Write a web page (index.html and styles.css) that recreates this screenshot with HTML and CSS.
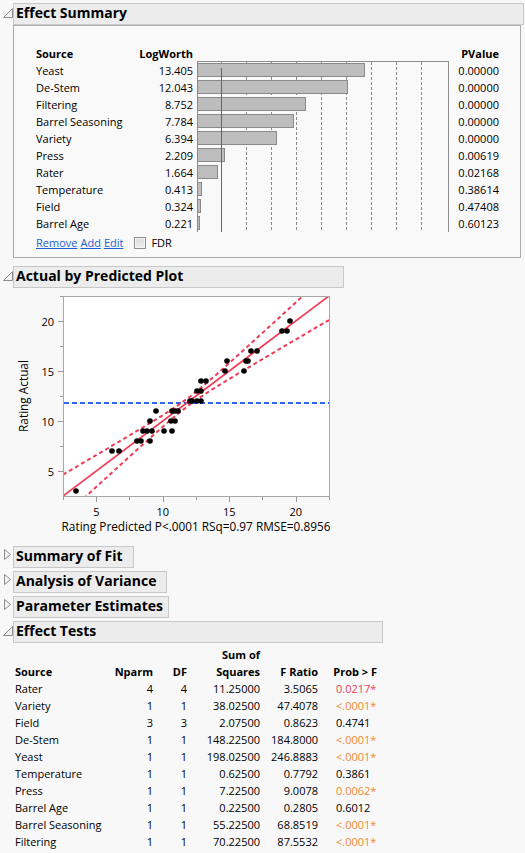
FILE: index.html
```html
<!DOCTYPE html>
<html>
<head>
<meta charset="utf-8">
<title>Fit Least Squares</title>
<link rel="stylesheet" href="styles.css">
</head>
<body>

<section class="outline">
  <div class="ohead">
    <span class="tri-box"><svg class="tri-open" width="10" height="10" viewBox="0 0 10 10"><path d="M0.5 9.5H9.5V0.5Z" fill="#f2f2f2" stroke="#8c8c8c"/></svg></span>
    <div class="otitle w-es">Effect Summary</div>
  </div>
  <div class="es-box">
    <div class="es-grid">
      <div class="col col-name">
        <div class="cell th">Source</div>
        <div class="cell">Yeast</div>
        <div class="cell">De-Stem</div>
        <div class="cell">Filtering</div>
        <div class="cell">Barrel Seasoning</div>
        <div class="cell">Variety</div>
        <div class="cell">Press</div>
        <div class="cell">Rater</div>
        <div class="cell">Temperature</div>
        <div class="cell">Field</div>
        <div class="cell">Barrel Age</div>
      </div>
      <div class="col col-lw">
        <div class="cell th">LogWorth</div>
        <div class="cell">13.405</div>
        <div class="cell">12.043</div>
        <div class="cell">8.752</div>
        <div class="cell">7.784</div>
        <div class="cell">6.394</div>
        <div class="cell">2.209</div>
        <div class="cell">1.664</div>
        <div class="cell">0.413</div>
        <div class="cell">0.324</div>
        <div class="cell">0.221</div>
      </div>
      <div class="bar-panel">
        <div class="bar-row"><div class="bar" style="width:167.6px"></div></div>
        <div class="bar-row"><div class="bar" style="width:150.5px"></div></div>
        <div class="bar-row"><div class="bar" style="width:109.4px"></div></div>
        <div class="bar-row"><div class="bar" style="width:97.3px"></div></div>
        <div class="bar-row"><div class="bar" style="width:79.9px"></div></div>
        <div class="bar-row"><div class="bar" style="width:27.6px"></div></div>
        <div class="bar-row"><div class="bar" style="width:20.8px"></div></div>
        <div class="bar-row"><div class="bar" style="width:5.2px"></div></div>
        <div class="bar-row"><div class="bar" style="width:4.1px"></div></div>
        <div class="bar-row"><div class="bar" style="width:2.8px"></div></div>
      </div>
      <div class="col col-pv">
        <div class="cell th">PValue</div>
        <div class="cell">0.00000</div>
        <div class="cell">0.00000</div>
        <div class="cell">0.00000</div>
        <div class="cell">0.00000</div>
        <div class="cell">0.00000</div>
        <div class="cell">0.00619</div>
        <div class="cell">0.02168</div>
        <div class="cell">0.38614</div>
        <div class="cell">0.47408</div>
        <div class="cell">0.60123</div>
      </div>
    </div>
    <div class="es-links">
      <a class="lnk">Remove</a>
      <a class="lnk">Add</a>
      <a class="lnk">Edit</a>
      <span class="chk"></span>
      <span class="fdr">FDR</span>
    </div>
  </div>
</section>

<section class="outline abp">
  <div class="ohead">
    <span class="tri-box"><svg class="tri-open" width="10" height="10" viewBox="0 0 10 10"><path d="M0.5 9.5H9.5V0.5Z" fill="#f2f2f2" stroke="#8c8c8c"/></svg></span>
    <div class="otitle w-abp">Actual by Predicted Plot</div>
  </div>
  <svg class="apchart" width="340" height="250" viewBox="0 0 340 250">
    <defs><clipPath id="pc"><rect x="64" y="9" width="265" height="199"/></clipPath></defs>
    <rect x="63.5" y="8.5" width="266" height="200" fill="#ffffff" stroke="#a8a8a8"/>
    <path d="M58 33.5H63M58 83.5H63M58 133.5H63M58 183.5H63" stroke="#9a9a9a"/>
    <path d="M60 8.5H63M60 58.5H63M60 108.5H63M60 158.5H63" stroke="#9a9a9a"/>
    <path d="M96.5 209V214M163.5 209V214M229.5 209V214M296.5 209V214" stroke="#9a9a9a"/>
    <path d="M63.5 209V212M129.5 209V212M196.5 209V212M262.5 209V212M329.5 209V212" stroke="#9a9a9a"/>
    <text class="tk" x="54" y="38" text-anchor="end">20</text>
    <text class="tk" x="54" y="88" text-anchor="end">15</text>
    <text class="tk" x="54" y="138" text-anchor="end">10</text>
    <text class="tk" x="54" y="188" text-anchor="end">5</text>
    <text class="tk" x="96.3" y="228" text-anchor="middle">5</text>
    <text class="tk" x="162.8" y="228" text-anchor="middle">10</text>
    <text class="tk" x="229.3" y="228" text-anchor="middle">15</text>
    <text class="tk" x="295.8" y="228" text-anchor="middle">20</text>
    <text class="tk ax-title" x="196" y="243" text-anchor="middle">Rating Predicted P&lt;.0001 RSq=0.97 RMSE=0.8956</text>
    <text class="tk ax-title" transform="translate(28,108) rotate(-90)" text-anchor="middle">Rating Actual</text>
    <g clip-path="url(#pc)">
      <line x1="64" y1="115" x2="329" y2="115" stroke="#2f66f2" stroke-width="2" stroke-dasharray="5 3"/>
      <line x1="63" y1="208" x2="329" y2="8" stroke="#ee3c55" stroke-width="1.7"/>
      <path d="M63,186.6L82.95,174.9L109.55,159.25L136.15,143.46L149.45,135.45L162.75,127.25L176.05,118.63L189.35,109.12L202.65,98.41L215.95,86.91L229.25,75.06L242.55,63.05L269.15,38.82L295.75,14.48L309.05,2.3" fill="none" stroke="#ee3c55" stroke-width="2" stroke-dasharray="4 3"/>
      <path d="M63,229.4L82.95,211.1L109.55,186.75L136.15,162.54L149.45,150.55L162.75,138.75L176.05,127.36L189.35,116.88L202.65,107.59L215.95,99.09L229.25,90.94L242.55,82.95L269.15,67.18L295.75,51.52L309.05,43.71L329,32.02" fill="none" stroke="#ee3c55" stroke-width="2" stroke-dasharray="4 3"/>
      <g fill="#000">
        <circle cx="76" cy="203" r="2.8"/>
        <circle cx="112" cy="163" r="2.8"/>
        <circle cx="119" cy="163" r="2.8"/>
        <circle cx="137" cy="153" r="2.8"/>
        <circle cx="141" cy="153" r="2.8"/>
        <circle cx="150" cy="153" r="2.8"/>
        <circle cx="143" cy="143" r="2.8"/>
        <circle cx="147" cy="143" r="2.8"/>
        <circle cx="152" cy="143" r="2.8"/>
        <circle cx="164" cy="143" r="2.8"/>
        <circle cx="172" cy="143" r="2.8"/>
        <circle cx="150" cy="133" r="2.8"/>
        <circle cx="171" cy="133" r="2.8"/>
        <circle cx="175" cy="133" r="2.8"/>
        <circle cx="156" cy="123" r="2.8"/>
        <circle cx="172" cy="123" r="2.8"/>
        <circle cx="175" cy="123" r="2.8"/>
        <circle cx="178" cy="123" r="2.8"/>
        <circle cx="190" cy="113" r="2.8"/>
        <circle cx="192" cy="113" r="2.8"/>
        <circle cx="197" cy="113" r="2.8"/>
        <circle cx="201" cy="113" r="2.8"/>
        <circle cx="197" cy="103" r="2.8"/>
        <circle cx="201" cy="103" r="2.8"/>
        <circle cx="201" cy="93" r="2.8"/>
        <circle cx="206" cy="93" r="2.8"/>
        <circle cx="225" cy="83" r="2.8"/>
        <circle cx="244" cy="83" r="2.8"/>
        <circle cx="227" cy="73" r="2.8"/>
        <circle cx="246" cy="73" r="2.8"/>
        <circle cx="248" cy="73" r="2.8"/>
        <circle cx="251" cy="63" r="2.8"/>
        <circle cx="257" cy="63" r="2.8"/>
        <circle cx="282" cy="43" r="2.8"/>
        <circle cx="287" cy="43" r="2.8"/>
        <circle cx="290" cy="33" r="2.8"/>
      </g>
    </g>
  </svg>
</section>

<section class="outline closed first-closed">
  <div class="ohead">
    <span class="tri-box"><svg class="tri-closed" width="8" height="11" viewBox="0 0 8 11"><path d="M0.5 0.5L6.5 5.5L0.5 10.5Z" fill="#f2f2f2" stroke="#8c8c8c"/></svg></span>
    <div class="otitle w-sof">Summary of Fit</div>
  </div>
</section>
<section class="outline closed">
  <div class="ohead">
    <span class="tri-box"><svg class="tri-closed" width="8" height="11" viewBox="0 0 8 11"><path d="M0.5 0.5L6.5 5.5L0.5 10.5Z" fill="#f2f2f2" stroke="#8c8c8c"/></svg></span>
    <div class="otitle w-aov">Analysis of Variance</div>
  </div>
</section>
<section class="outline closed">
  <div class="ohead">
    <span class="tri-box"><svg class="tri-closed" width="8" height="11" viewBox="0 0 8 11"><path d="M0.5 0.5L6.5 5.5L0.5 10.5Z" fill="#f2f2f2" stroke="#8c8c8c"/></svg></span>
    <div class="otitle w-pe">Parameter Estimates</div>
  </div>
</section>

<section class="outline et-section">
  <div class="ohead">
    <span class="tri-box"><svg class="tri-open" width="10" height="10" viewBox="0 0 10 10"><path d="M0.5 9.5H9.5V0.5Z" fill="#f2f2f2" stroke="#8c8c8c"/></svg></span>
    <div class="otitle w-et">Effect Tests</div>
  </div>
  <table class="et">
    <colgroup>
      <col class="c-src"><col class="c-np"><col class="c-df"><col class="c-ss"><col class="c-fr"><col class="c-p">
    </colgroup>
    <thead>
      <tr><th></th><th></th><th></th><th>Sum of</th><th></th><th></th></tr>
      <tr><th class="src">Source</th><th>Nparm</th><th>DF</th><th>Squares</th><th>F Ratio</th><th>Prob &gt; F</th></tr>
    </thead>
    <tbody>
      <tr><td class="src">Rater</td><td>4</td><td>4</td><td>11.25000</td><td>3.5065</td><td class="p sig-r">0.0217*</td></tr>
      <tr><td class="src">Variety</td><td>1</td><td>1</td><td>38.02500</td><td>47.4078</td><td class="p sig-o">&lt;.0001*</td></tr>
      <tr><td class="src">Field</td><td>3</td><td>3</td><td>2.07500</td><td>0.8623</td><td class="p">0.4741</td></tr>
      <tr><td class="src">De-Stem</td><td>1</td><td>1</td><td>148.22500</td><td>184.8000</td><td class="p sig-o">&lt;.0001*</td></tr>
      <tr><td class="src">Yeast</td><td>1</td><td>1</td><td>198.02500</td><td>246.8883</td><td class="p sig-o">&lt;.0001*</td></tr>
      <tr><td class="src">Temperature</td><td>1</td><td>1</td><td>0.62500</td><td>0.7792</td><td class="p">0.3861</td></tr>
      <tr><td class="src">Press</td><td>1</td><td>1</td><td>7.22500</td><td>9.0078</td><td class="p sig-o">0.0062*</td></tr>
      <tr><td class="src">Barrel Age</td><td>1</td><td>1</td><td>0.22500</td><td>0.2805</td><td class="p">0.6012</td></tr>
      <tr><td class="src">Barrel Seasoning</td><td>1</td><td>1</td><td>55.22500</td><td>68.8519</td><td class="p sig-o">&lt;.0001*</td></tr>
      <tr><td class="src">Filtering</td><td>1</td><td>1</td><td>70.22500</td><td>87.5532</td><td class="p sig-o">&lt;.0001*</td></tr>
    </tbody>
  </table>
</section>

</body>
</html>
```

FILE: styles.css
```css
* { box-sizing: border-box; }
html, body { margin: 0; }
body {
  background: #f8f8f8;
  font-family: "Open Sans", "Noto Sans", sans-serif;
  font-size: 11px;
  color: #000;
  padding-top: 3px;
  width: 525px;
  height: 853px;
  overflow: hidden;
}

/* outline headers */
.ohead { display: flex; height: 22px; }
.tri-box { flex: none; width: 13px; position: relative; }
.tri-open { display: block; margin: 5px 0 0 3px; }
.tri-closed { display: block; margin: 3px 0 0 4px; }
.otitle {
  height: 22px;
  border: 1px solid #c8c8c8;
  background: #ececec;
  font-weight: 700;
  font-size: 14px;
  line-height: 17px;
  padding: 0 2px;
  white-space: nowrap;
}
.w-es { width: 511px; }
.w-abp { width: 331px; }
.w-sof { width: 121px; }
.w-aov { width: 154px; }
.w-pe { width: 156px; }
.w-et { width: 370px; }

/* effect summary */
.es-box {
  margin-left: 13px;
  width: 508px;
  height: 233px;
  border: 1px solid #acacac;
  background: #f9f9f9;
  padding: 19px 0 0 22px;
  margin-bottom: 8px;
}
.es-grid { display: flex; align-items: flex-start; }
.col { flex: none; }
.cell { height: 17px; line-height: 17px; white-space: nowrap; }
.th { font-weight: 700; }
.col-name { width: 100px; }
.col-lw { width: 57px; text-align: right; }
.col-pv { width: 50px; text-align: right; }
.bar-panel {
  flex: none;
  position: relative;
  margin: 16px 0 0 4px;
  width: 252px;
  height: 171px;
  border: 1px solid #8e8e8e;
  border-bottom: none;
  background-color: #f9f9f9;
  background-image:
    repeating-linear-gradient(to bottom, transparent 0 3px, #f9f9f9 3px 5px),
    repeating-linear-gradient(to right, transparent 0 23px, #8a8a8a 23px 24px, transparent 24px 25px);
  background-size: 100% 100%, 224px 100%;
  background-repeat: no-repeat;
}
.bar-panel::after {
  content: "";
  position: absolute;
  left: 23px;
  top: 6px;
  bottom: 0;
  width: 1px;
  background: #3d63dd;
}
.bar-row { height: 17px; padding-top: 1px; }
.bar {
  height: 14px;
  margin-left: -1px;
  background: #bdbdbd;
  border: 1px solid #8a8a8a;
}
.es-links {
  display: flex;
  align-items: center;
  gap: 3px;
  height: 17px;
  margin-top: 2px;
  white-space: nowrap;
}
.lnk { color: #1c5fd4; text-decoration: underline; cursor: pointer; }
.chk {
  width: 12px;
  height: 12px;
  margin-left: 8px;
  border: 1px solid #8f8f8f;
  background: linear-gradient(#dcdcdc, #eeeeee);
  box-shadow: inset 0 0 0 1px #f4f4f4;
}
.fdr { margin-left: 2px; }

/* actual by predicted */
.apchart { display: block; }
.tk { font-family: "Open Sans", "Noto Sans", sans-serif; font-size: 11px; fill: #000; }
.ax-title { font-size: 11.8px; }

/* closed outlines */
.first-closed { margin-top: 8px; }
.closed + .closed, .closed + .et-section { margin-top: 3px; }

/* effect tests */
.et {
  margin: 3px 0 0 15px;
  border-collapse: collapse;
  border-spacing: 0;
  table-layout: fixed;
  width: 362px;
}
.c-src { width: 95px; }
.c-np { width: 43px; }
.c-df { width: 34px; }
.c-ss { width: 73px; }
.c-fr { width: 58px; }
.c-p { width: 59px; }
.et th, .et td {
  padding: 0;
  height: 17px;
  line-height: 17px;
  white-space: nowrap;
  text-align: right;
  font-weight: 400;
}
.et th { font-weight: 700; }
.et .src { text-align: left; }
.et td.p { text-align: left; padding-left: 18px; }
.sig-r { color: #e8405c; }
.sig-o { color: #ef8a32; }
```
